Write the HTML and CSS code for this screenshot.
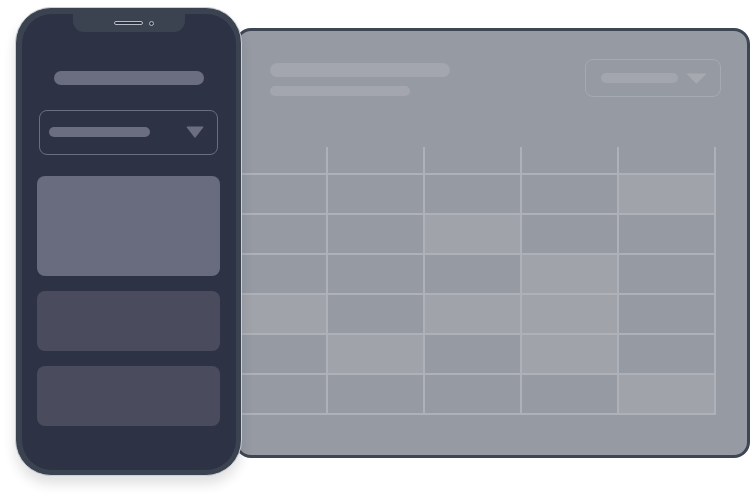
FILE: index.html
```html
<!DOCTYPE html>
<html>
<head>
<meta charset="utf-8">
<link rel="stylesheet" href="styles.css">
</head>
<body>
<div class="stage">
  <div class="tablet">
    <div class="t-header">
      <div class="t-titles">
        <div class="t-pill t-pill-1"></div>
        <div class="t-pill t-pill-2"></div>
      </div>
      <div class="t-select">
        <div class="t-select-pill"></div>
        <svg class="tri" width="21" height="11" viewBox="0 0 21 11"><path d="M1.5 0.5 H19.5 Q20.5 0.5 19.8 1.4 L11.2 10.3 Q10.5 11 9.8 10.3 L1.2 1.4 Q0.5 0.5 1.5 0.5 Z" fill="#a6a9b0"/></svg>
      </div>
    </div>
    <div class="grid">
      <div class="c h"></div><div class="c h"></div><div class="c h"></div><div class="c h"></div><div class="c h"></div>
      <div class="c"></div><div class="c"></div><div class="c"></div><div class="c"></div><div class="c l"></div>
      <div class="c"></div><div class="c"></div><div class="c l"></div><div class="c"></div><div class="c"></div>
      <div class="c"></div><div class="c"></div><div class="c"></div><div class="c l"></div><div class="c"></div>
      <div class="c l"></div><div class="c"></div><div class="c l"></div><div class="c l"></div><div class="c"></div>
      <div class="c"></div><div class="c l"></div><div class="c"></div><div class="c l"></div><div class="c"></div>
      <div class="c"></div><div class="c"></div><div class="c"></div><div class="c"></div><div class="c l"></div>
    </div>
  </div>
  <div class="phone">
    <div class="screen">
      <div class="notch">
        <span class="speaker"></span>
        <span class="camera"></span>
      </div>
      <div class="p-title"></div>
      <div class="p-select">
        <div class="p-select-pill"></div>
        <svg class="tri" width="18" height="12" viewBox="0 0 18 12"><path d="M1.2 0.5 H16.8 Q17.8 0.5 17.2 1.4 L9.7 11.3 Q9 12 8.3 11.3 L0.8 1.4 Q0.2 0.5 1.2 0.5 Z" fill="#6b6e80"/></svg>
      </div>
      <div class="card card-main"></div>
      <div class="card card-dim"></div>
      <div class="card card-dim"></div>
    </div>
  </div>
</div>
</body>
</html>
```
FILE: styles.css
```css
* { box-sizing: border-box; }
html, body { margin: 0; padding: 0; background: #ffffff; }
body { font-family: "Liberation Sans", Arial, sans-serif; }

.stage {
  position: relative;
  width: 750px;
  height: 500px;
  overflow: hidden;
  padding: 28px 0 0 235px;
}

/* Tablet */
.tablet {
  width: 515px;
  height: 430px;
  background: #969aa3;
  border: 3px solid #3e4553;
  border-radius: 16px;
}
.t-header {
  display: flex;
  justify-content: space-between;
  align-items: flex-start;
  padding: 28px 26px 0 32px;
}
.t-titles {
  display: flex;
  flex-direction: column;
  gap: 9px;
  margin-top: 4px;
}
.t-pill { background: #a3a6ae; }
.t-pill-1 { width: 180px; height: 14px; border-radius: 7px; }
.t-pill-2 { width: 140px; height: 10px; border-radius: 5px; }
.t-select {
  width: 136px;
  height: 38px;
  border: 1.5px solid #a6a9b0;
  border-radius: 8px;
  display: flex;
  align-items: center;
  justify-content: space-between;
  padding: 0 13px 0 15px;
}
.t-select-pill {
  width: 77px;
  height: 10px;
  border-radius: 5px;
  background: #a3a6ae;
}
.tri { display: block; }

.grid {
  margin-top: 50px;
  display: grid;
  grid-template-columns: 88px repeat(4, 95.5px);
  grid-template-rows: 26px repeat(6, 38.5px);
  gap: 1.5px;
  padding: 0 1.5px 1.5px 0;
  width: max-content;
  background: #aeb1b8;
}
.c { background: #969aa3; }
.c.l { background: #a1a3ab; }

/* Phone */
.phone {
  position: absolute;
  left: 15px;
  top: 7px;
  width: 227px;
  height: 469px;
  background: #3b4350;
  border: 1.5px solid #ccd0d5;
  border-radius: 36px;
  padding: 5.5px;
  box-shadow: 0 8px 12px rgba(40, 45, 55, 0.14);
}
.screen {
  position: relative;
  height: 100%;
  background: #2e3245;
  border-radius: 30px;
  padding: 0 15px;
  display: flex;
  flex-direction: column;
  align-items: center;
}
.notch {
  width: 112px;
  height: 18px;
  background: #3b4350;
  border-radius: 0 0 11px 11px;
  display: flex;
  align-items: center;
  justify-content: center;
  gap: 6px;
  padding-left: 11px;
  padding-top: 1px;
}
.speaker {
  width: 29px;
  height: 4px;
  border: 1px solid #b9bdc4;
  border-radius: 2px;
  background: #2e3245;
}
.camera {
  width: 5px;
  height: 5px;
  border: 1px solid #b9bdc4;
  border-radius: 50%;
  background: #2e3245;
}
.p-title {
  margin-top: 39px;
  width: 150px;
  height: 14px;
  border-radius: 7px;
  background: #6b6e80;
}
.p-select {
  margin-top: 25px;
  width: 179px;
  height: 45px;
  border: 1.5px solid #6b6e80;
  border-radius: 8px;
  display: flex;
  align-items: center;
  justify-content: space-between;
  padding: 0 13px 0 9px;
}
.p-select-pill {
  width: 101px;
  height: 10px;
  border-radius: 5px;
  background: #6b6e80;
}
.card {
  width: 183px;
  border-radius: 8px;
}
.card-main {
  margin-top: 21px;
  height: 100px;
  background: #696c7f;
}
.card-dim {
  margin-top: 15px;
  height: 60px;
  background: #4a4c5e;
}
```
